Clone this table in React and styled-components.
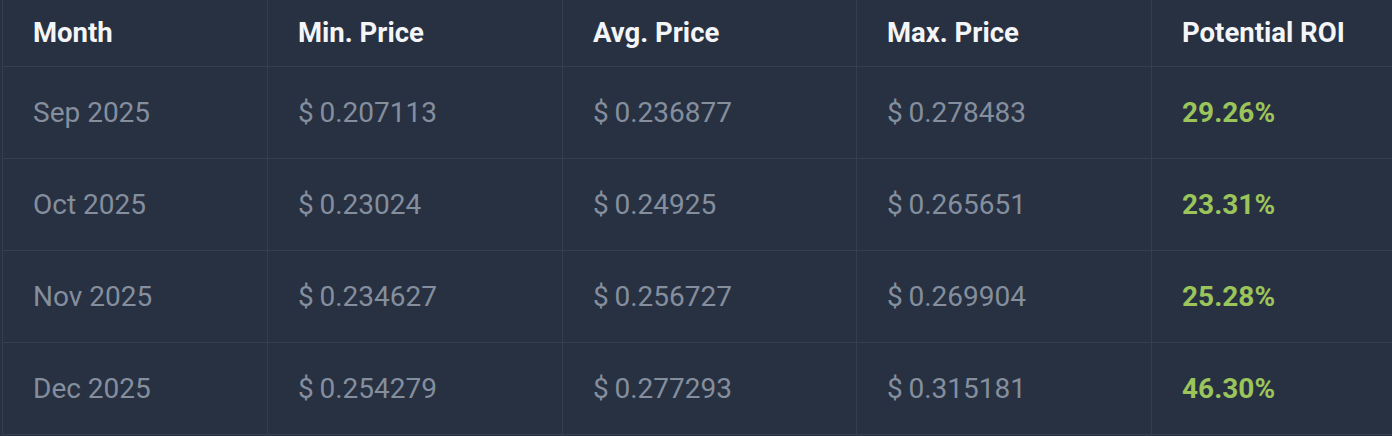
import React from 'react';
import styled, { createGlobalStyle } from 'styled-components';

const GlobalStyle = createGlobalStyle`
  html, body {
    margin: 0;
    padding: 0;
    background: #273142;
  }
  body {
    font-family: Roboto, "Liberation Sans", sans-serif;
  }
`;

const Table = styled.div`
  padding-left: 2px;
  background: #273142;
`;

const Row = styled.div`
  display: grid;
  grid-template-columns: 265px 295px 294px 295px 1fr;
  height: ${props => props.$head ? '67px' : '92px'};
  border-bottom: 1px solid #343e4f;
  box-sizing: border-box;
`;

const Cell = styled.div`
  display: flex;
  align-items: center;
  padding-left: 30px;
  border-left: 1px solid #343e4f;
  font-size: 28px;
  white-space: nowrap;
  color: #858e9d;
`;

const HeadCell = styled(Cell)`
  color: #f4f5f7;
  font-weight: 700;
  font-size: 27.5px;
  padding-bottom: 2px;
`;

const Roi = styled(Cell)`
  color: #9bc45a;
  font-weight: 700;
`;

const headers = ['Month', 'Min. Price', 'Avg. Price', 'Max. Price', 'Potential ROI'];

const rows = [
  ['Sep 2025', '0.207113', '0.236877', '0.278483', '29.26%'],
  ['Oct 2025', '0.23024', '0.24925', '0.265651', '23.31%'],
  ['Nov 2025', '0.234627', '0.256727', '0.269904', '25.28%'],
  ['Dec 2025', '0.254279', '0.277293', '0.315181', '46.30%'],
];

const price = v => '$\u2009' + v;

export default function App() {
  return (
    <>
      <GlobalStyle />
      <Table>
        <Row $head>
          {headers.map(h => <HeadCell key={h}>{h}</HeadCell>)}
        </Row>
        {rows.map(r => (
          <Row key={r[0]}>
            <Cell>{r[0]}</Cell>
            <Cell>{price(r[1])}</Cell>
            <Cell>{price(r[2])}</Cell>
            <Cell>{price(r[3])}</Cell>
            <Roi>{r[4]}</Roi>
          </Row>
        ))}
      </Table>
    </>
  );
}
